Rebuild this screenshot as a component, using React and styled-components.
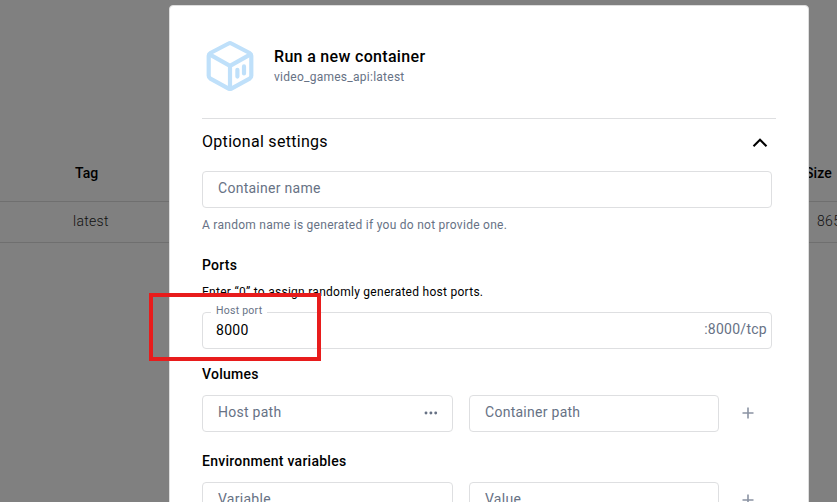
import React from "react";
import styled, { createGlobalStyle } from "styled-components";

const GlobalStyle = createGlobalStyle`
  * { box-sizing: border-box; }
  body { margin: 0; background: #808080; font-family: Roboto, "Liberation Sans", sans-serif; overflow: hidden; }
`;

const Page = styled.div`
  position: relative;
  width: 837px;
  height: 502px;
  overflow: hidden;
  background: #808080;
`;

const Table = styled.div`
  padding-top: 145px;
`;

const TableRow = styled.div`
  display: flex;
  align-items: center;
  justify-content: space-between;
  height: ${(p) => (p.$head ? 57 : 41)}px;
  padding: 0 0 ${(p) => (p.$head ? 0 : 2)}px ${(p) => (p.$head ? 75 : 73)}px;
  border-bottom: 1px solid #6f6f6f;
  color: ${(p) => (p.$head ? "#000" : "#111")};
  font-size: 14px;
  font-weight: ${(p) => (p.$head ? 500 : 300)};
  letter-spacing: ${(p) => (p.$head ? 0.1 : 0.3)}px;
`;

const EndCell = styled.span`
  flex: none;
  width: ${(p) => p.$width}px;
  white-space: nowrap;
`;

const Dialog = styled.section`
  position: absolute;
  left: 169px;
  top: 5px;
  width: 640px;
  height: 560px;
  padding: 0 32px;
  background: #fff;
  border: 1px solid #dedede;
  border-radius: 4px;
`;

const Header = styled.header`
  display: flex;
  align-items: center;
  gap: 20px;
  height: 113px;
  padding: 8px 0 0 4px;
  border-bottom: 1px solid #dedfe1;
`;

const Titles = styled.div`
  display: flex;
  flex-direction: column;
  padding-top: 1px;
`;

const Title = styled.h1`
  margin: 0;
  font-size: 16px;
  line-height: 20px;
  font-weight: 500;
  letter-spacing: 0.32px;
  color: #000;
`;

const Subtitle = styled.span`
  font-size: 12px;
  line-height: 20px;
  letter-spacing: 0.26px;
  color: #677285;
`;

const Form = styled.div`
  display: flex;
  flex-direction: column;
  width: 570px;
`;

const Accordion = styled.div`
  display: flex;
  align-items: center;
  justify-content: space-between;
  height: 52px;
  padding: 0 4px 7px 0;
  font-size: 16px;
  letter-spacing: 0.3px;
  color: #000;
`;

const Field = styled.div`
  position: relative;
  display: flex;
  align-items: center;
  justify-content: space-between;
  flex: ${(p) => (p.$width ? "none" : "1 1 auto")};
  width: ${(p) => (p.$width ? `${p.$width}px` : "auto")};
  height: 37px;
  min-height: 37px;
  padding: 0 ${(p) => (p.$tight ? 4 : 14)}px 3px ${(p) => (p.$tight ? 13 : 15)}px;
  border: 1px solid #dedfe1;
  border-radius: 4px;
  font-size: 14px;
  letter-spacing: 0.27px;
  color: #677285;
`;

const FloatingLabel = styled.span`
  position: absolute;
  left: 8px;
  top: -9px;
  padding: 0 5px;
  background: #fff;
  font-size: 10.5px;
  line-height: 14px;
  letter-spacing: 0.25px;
`;

const Value = styled.span`
  padding-top: 2px;
  color: #000;
`;

const Text = styled.p`
  margin: 0;
  height: ${(p) => p.$height}px;
  font-size: 12px;
  line-height: 34px;
  letter-spacing: 0.27px;
  color: ${(p) => (p.$dark ? "#000" : "#677285")};
`;

const SectionTitle = styled.h2`
  margin: 0;
  height: ${(p) => p.$height}px;
  padding-top: ${(p) => p.$top}px;
  font-size: 14px;
  line-height: 20px;
  font-weight: 500;
  letter-spacing: 0.26px;
  color: #000;
`;

const Pair = styled.div`
  display: flex;
  align-items: center;
  gap: 16px;
`;

const AddButton = styled.button`
  display: flex;
  margin-left: 7px;
  padding: 0 0 1px;
  border: 0;
  background: none;
`;

const Highlight = styled.div`
  position: absolute;
  left: 149px;
  top: 293px;
  width: 172px;
  height: 68px;
  border: 4px solid #e81c1c;
`;

const ContainerIcon = () => (
  <svg width="48" height="52" viewBox="0 0 48 52" fill="none" stroke="#bfe0fa" strokeLinejoin="round">
    <path
      d="M22.6 3.5 Q24 2.7 25.4 3.5 L43.6 13 Q45.3 14 45.3 15.8 V35.8 Q45.3 37.6 43.6 38.6 L25.4 48.6 Q24 49.3 22.6 48.6 L4.4 38.6 Q2.7 37.6 2.7 35.8 V15.8 Q2.7 14 4.4 13 Z"
      strokeWidth="4.2"
    />
    <path d="M4 14.6 L24 25.8 L44 14.6 M24 26 V48" strokeWidth="4.2" />
    <path d="M31.4 29.8 V36.6 M38 26.4 V33.4" strokeWidth="4.2" strokeLinecap="round" />
  </svg>
);

const Chevron = () => (
  <svg width="16" height="12" viewBox="0 0 16 12" fill="none">
    <path d="M1.5 10.2 L8 3.8 L14.5 10.2" stroke="#000" strokeWidth="2.1" />
  </svg>
);

const Dots = () => (
  <svg width="14" height="6" viewBox="0 0 14 6" fill="#677285">
    <circle cx="2" cy="4" r="1.45" />
    <circle cx="6.9" cy="4" r="1.45" />
    <circle cx="11.7" cy="4" r="1.45" />
  </svg>
);

const Plus = () => (
  <svg width="12" height="12" viewBox="0 0 12 12" fill="none" stroke="#8b93a3" strokeWidth="1.6">
    <path d="M.5 6 H11.5 M6 .5 V11.5" />
  </svg>
);

const FieldPair = ({ first, second, browse }) => (
  <Pair>
    <Field $width={251}>
      <span>{first}</span>
      {browse && <Dots />}
    </Field>
    <Field $width={250}>{second}</Field>
    <AddButton aria-label="Add">
      <Plus />
    </AddButton>
  </Pair>
);

export default function App() {
  return (
    <Page>
      <GlobalStyle />
      <Table>
        <TableRow $head>
          <span>Tag</span>
          <EndCell $width={32}>Size</EndCell>
        </TableRow>
        <TableRow>
          <span>latest</span>
          <EndCell $width={20}>865</EndCell>
        </TableRow>
      </Table>
      <Dialog>
        <Header>
          <ContainerIcon />
          <Titles>
            <Title>Run a new container</Title>
            <Subtitle>video_games_api:latest</Subtitle>
          </Titles>
        </Header>
        <Form>
          <Accordion>
            <span>Optional settings</span>
            <Chevron />
          </Accordion>
          <Field>Container name</Field>
          <Text $height={40}>A random name is generated if you do not provide one.</Text>
          <SectionTitle $top={7} $height={27}>Ports</SectionTitle>
          <Text $height={37} $dark>Enter “0” to assign randomly generated host ports.</Text>
          <Field $tight>
            <FloatingLabel>Host port</FloatingLabel>
            <Value>8000</Value>
            <span>:8000/tcp</span>
          </Field>
          <SectionTitle $top={15} $height={46}>Volumes</SectionTitle>
          <FieldPair first="Host path" second="Container path" browse />
          <SectionTitle $top={19} $height={50}>Environment variables</SectionTitle>
          <FieldPair first="Variable" second="Value" />
        </Form>
      </Dialog>
      <Highlight />
    </Page>
  );
}
